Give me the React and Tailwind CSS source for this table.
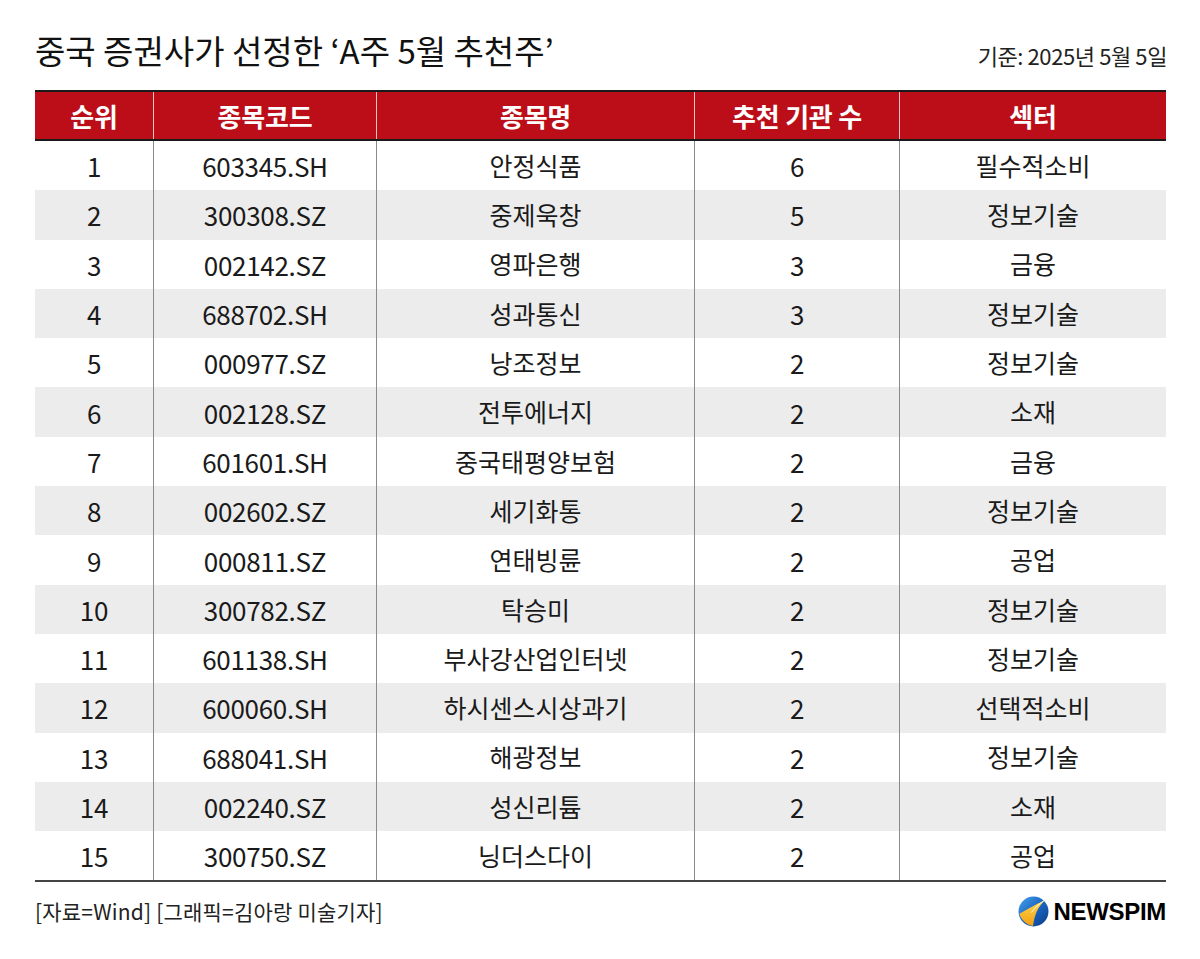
import React from 'react';

const rows = [
  ['1', '603345.SH', '안정식품', '6', '필수적소비'],
  ['2', '300308.SZ', '중제욱창', '5', '정보기술'],
  ['3', '002142.SZ', '영파은행', '3', '금융'],
  ['4', '688702.SH', '성과통신', '3', '정보기술'],
  ['5', '000977.SZ', '낭조정보', '2', '정보기술'],
  ['6', '002128.SZ', '전투에너지', '2', '소재'],
  ['7', '601601.SH', '중국태평양보험', '2', '금융'],
  ['8', '002602.SZ', '세기화통', '2', '정보기술'],
  ['9', '000811.SZ', '연태빙륜', '2', '공업'],
  ['10', '300782.SZ', '탁승미', '2', '정보기술'],
  ['11', '601138.SH', '부사강산업인터넷', '2', '정보기술'],
  ['12', '600060.SH', '하시센스시상과기', '2', '선택적소비'],
  ['13', '688041.SH', '해광정보', '2', '정보기술'],
  ['14', '002240.SZ', '성신리튬', '2', '소재'],
  ['15', '300750.SZ', '닝더스다이', '2', '공업'],
];

const headers = ['순위', '종목코드', '종목명', '추천 기관 수', '섹터'];
const cols = 'grid grid-cols-[118px_223px_318px_205px_267px]';

// columns holding digits are set a bit larger, like the source graphic
const numericCol = [true, true, false, true, false];

function Logo() {
  return (
    <div className="flex items-center gap-[4px]">
      <svg width="31" height="31" viewBox="0 0 30 30">
        <defs>
          <linearGradient id="lg" x1="0" y1="0" x2="1" y2="1">
            <stop offset="0" stopColor="#4aa3ea" />
            <stop offset="0.5" stopColor="#1a66c4" />
            <stop offset="1" stopColor="#0b3a85" />
          </linearGradient>
          <linearGradient id="ly" x1="0" y1="0" x2="0" y2="1">
            <stop offset="0" stopColor="#ffd64f" />
            <stop offset="1" stopColor="#f0a012" />
          </linearGradient>
        </defs>
        <circle cx="15" cy="15" r="14.5" fill="url(#lg)" />
        <path d="M1.5 17 C7 14 15 9 26 4 C19 11 16 18 14.5 29 C9 28 4.5 24 2 19 Z" fill="url(#ly)" />
        <path d="M13 16 C16 12 20 8 25 4.5" stroke="#fff" strokeWidth="0.9" fill="none" />
      </svg>
      <span className="font-['Liberation_Sans',sans-serif] font-bold text-[24px] tracking-[-0.3px] text-black leading-none">NEWSPIM</span>
    </div>
  );
}

export default function App() {
  return (
    <div className="w-[1200px] h-[959px] bg-white pl-[35px] pr-[34px] font-['Noto_Sans_CJK_KR','Noto_Sans',sans-serif] text-[#1a1a1a]">
      <div className="flex items-end justify-between h-[76px] pb-[9px]">
        <h1 className="text-[33px] leading-none tracking-[0px] font-normal text-[#111]">중국 증권사가 선정한 ‘A주 5월 추천주’</h1>
        <span className="text-[22px] leading-none tracking-[-0.4px] text-[#222] mr-[-1px] mb-[1px]">기준: 2025년 5월 5일</span>
      </div>
      <div className="mt-[14px] w-[1131px]">
        <div className={`${cols} h-[51px] bg-[#bb0e19] border-t-2 border-b-2 border-[#1a1a1a]`}>
          {headers.map((h, i) => (
            <div
              key={h}
              className={`flex items-center justify-center text-white font-bold text-[26px] tracking-[-0.2px] ${i > 0 ? 'border-l border-[#f3c2c4]' : ''}`}
            >
              {h}
            </div>
          ))}
        </div>
        {rows.map((r, ri) => (
          <div key={r[0]} className={`${cols} h-[49.3px] ${ri % 2 === 1 ? 'bg-[#ececec]' : 'bg-white'}`}>
            {r.map((c, i) => (
              <div
                key={i}
                className={`flex items-center justify-center ${numericCol[i] ? 'text-[26px] tracking-[-0.3px]' : 'text-[25px] tracking-[0px]'} ${i > 0 ? 'border-l border-[#8a8a8a]' : ''}`}
              >
                {c}
              </div>
            ))}
          </div>
        ))}
        <div className="h-[2px] bg-[#444]" />
      </div>
      <div className="flex items-center justify-between mt-[14px]">
        <span className="text-[21px] tracking-[0.2px] text-[#222] leading-none">[자료=Wind] [그래픽=김아랑 미술기자]</span>
        <Logo />
      </div>
    </div>
  );
}
